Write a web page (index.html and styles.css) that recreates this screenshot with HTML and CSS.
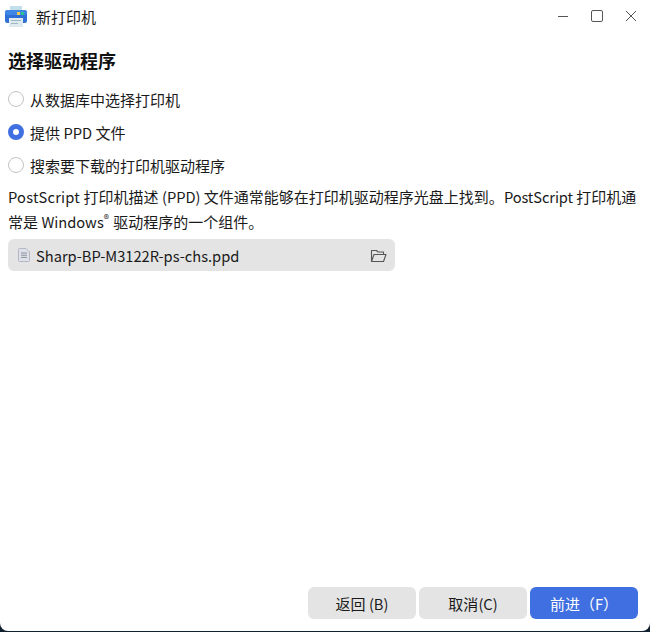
FILE: index.html
```html
<!DOCTYPE html>
<html lang="zh-CN">
<head>
<meta charset="utf-8">
<title>新打印机</title>
<link rel="stylesheet" href="styles.css">
</head>
<body>
<div class="window">
  <header class="titlebar">
    <svg class="app-icon" width="24" height="24" viewBox="0 0 24 24">
      <rect x="6" y="2" width="12" height="7" fill="#c2e0ea"/>
      <rect x="1" y="6" width="22" height="13" rx="2.5" fill="#2f6fd6"/>
      <rect x="1" y="6" width="22" height="5" rx="2.5" fill="#3f86e6"/>
      <rect x="13" y="8" width="3" height="3" fill="#f2c94c"/>
      <rect x="17" y="8" width="3" height="3" fill="#2fc28f"/>
      <rect x="5" y="14" width="14" height="9" fill="#dfeaee"/>
      <rect x="7" y="16" width="10" height="1" fill="#9fb6c2"/>
      <rect x="7" y="19" width="7" height="1" fill="#9fb6c2"/>
    </svg>
    <span class="app-title">新打印机</span>
    <div class="win-controls">
      <svg width="12" height="12" viewBox="0 0 12 12"><path d="M1 6.5h10" stroke="#555" stroke-width="1" fill="none"/></svg>
      <svg width="12" height="12" viewBox="0 0 12 12"><rect x="0.5" y="0.5" width="11" height="11" rx="1.5" stroke="#555" stroke-width="1" fill="none"/></svg>
      <svg width="12" height="12" viewBox="0 0 12 12"><path d="M1 1l10 10M11 1L1 11" stroke="#555" stroke-width="1" fill="none"/></svg>
    </div>
  </header>
  <main class="content">
    <h1 class="heading">选择驱动程序</h1>
    <div class="radios">
      <label class="radio-row"><span class="radio"></span>从数据库中选择打印机</label>
      <label class="radio-row"><span class="radio checked"></span><span>提供 <span class="latin">PPD</span> 文件</span></label>
      <label class="radio-row"><span class="radio"></span>搜索要下载的打印机驱动程序</label>
    </div>
    <p class="desc"><span class="latin wider">PostScript </span>打印机描述 <span class="latin">(PPD)</span> 文件通常能够在打印机驱动程序光盘上找到。<span class="latin narrower">PostScript </span>打印机通常是 <span class="latin">Windows</span><sup class="reg">®</sup> 驱动程序的一个组件。</p>
    <div class="file-field">
      <svg width="12" height="14" viewBox="0 0 12 14"><path d="M0.5 1.5a1 1 0 0 1 1-1h6.5l3.5 3.5v8.5a1 1 0 0 1-1 1h-9a1 1 0 0 1-1-1z" fill="#dfe1e8" stroke="#b4b8c6"/><path d="M3 5h6M3 7.2h6M3 9.4h6" stroke="#8b90a2"/></svg>
      <span class="file-name latin">Sharp-BP-M3122R-ps-chs.ppd</span>
      <svg class="folder" width="17" height="14" viewBox="0 0 17 14"><path d="M1.5 12.5V1.5h5l1.5 1.5h5.5v2.5M1.5 12.5l2.5-7h12l-2.5 7z" fill="none" stroke="#555" stroke-width="1.1" stroke-linejoin="round"/></svg>
    </div>
  </main>
  <footer class="actions">
    <button class="btn">返回 <span class="latin">(B)</span></button>
    <button class="btn">取消<span class="latin">(C)</span></button>
    <button class="btn primary">前进（<span class="latin">F</span>）</button>
  </footer>
</div>
</body>
</html>
```
FILE: styles.css
```css
* { box-sizing: border-box; }
html, body { margin: 0; padding: 0; height: 100%; background: #10202e; }
body { font-family: "Noto Sans CJK SC", "Noto Sans", sans-serif; font-size: 15px; color: #1a1a1a; overflow: hidden; }
.window { height: 631px; background: #fff; border-radius: 0 0 8px 8px; display: flex; flex-direction: column; }
.titlebar { height: 32px; display: flex; align-items: center; padding: 0 13px 0 4px; flex: none; }
.app-icon { flex: none; }
.app-title { margin-left: 8px; }
.win-controls { margin-left: auto; display: flex; gap: 22px; align-items: center; }
.content { flex: 1; padding: 0 8px; min-height: 0; }
.latin { font-size: 14.67px; }
.wider { letter-spacing: 0.2px; }
.narrower { letter-spacing: -0.1px; }
.heading { margin: 15px 0 0; font-size: 18px; font-weight: 700; line-height: 26px; color: #111; }
.radios { margin-top: 13px; display: flex; flex-direction: column; gap: 7px; }
.radio-row { height: 26px; display: flex; align-items: center; gap: 6px; }
.radio { width: 16px; height: 16px; border-radius: 50%; border: 1px solid #c4c4c4; background: #fff; flex: none; }
.radio.checked { border: 5px solid #3f6fe0; }
.desc { margin: 6px 0 0; line-height: 25px; }
.reg { font-size: 11px; line-height: 0; vertical-align: 5px; margin-right: 1px; }
.file-field { margin-top: 5px; width: 387px; height: 32px; border-radius: 6px; background: #e4e4e4; display: flex; align-items: center; padding: 0 8px 0 10px; }
.file-name { margin-left: 6px; }
.folder { margin: 2px 0 0 auto; }
.actions { flex: none; display: flex; justify-content: flex-end; gap: 3px; padding: 0 12px 12px 0; }
.btn { width: 108px; height: 32px; border: 0; border-radius: 6px; background: #e4e4e4; font: inherit; color: #1a1a1a; padding: 0; }
.btn.primary { background: #3f6fe0; color: #fff; }
```
